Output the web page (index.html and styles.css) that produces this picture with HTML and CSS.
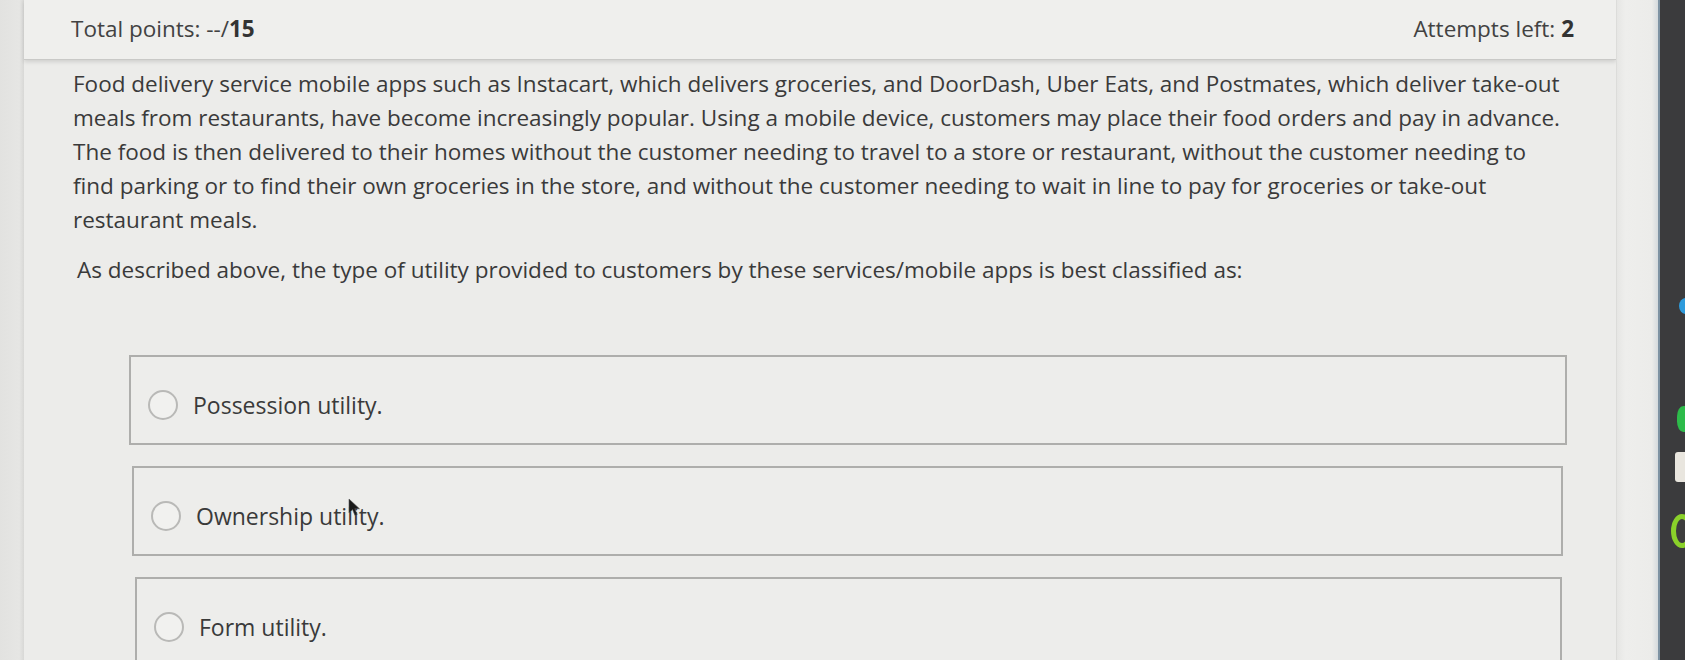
FILE: index.html
```html
<!DOCTYPE html>
<html lang="en">
<head>
<meta charset="utf-8">
<title>Quiz question</title>
<link rel="stylesheet" href="styles.css">
</head>
<body>
<div class="screen">
  <div class="left-edge"></div>
  <main class="card">
    <header class="quiz-header">
      <span class="points">Total points: --/<b>15</b></span>
      <span class="attempts">Attempts left: <b>2</b></span>
    </header>
    <section class="question">
      <p class="stem">Food delivery service mobile apps such as Instacart, which delivers groceries, and DoorDash, Uber Eats, and Postmates, which deliver take-out<br>meals from restaurants, have become increasingly popular. Using a mobile device, customers may place their food orders and pay in advance.<br>The food is then delivered to their homes without the customer needing to travel to a store or restaurant, without the customer needing to<br>find parking or to find their own groceries in the store, and without the customer needing to wait in line to pay for groceries or take-out<br>restaurant meals.</p>
      <p class="prompt">As described above, the type of utility provided to customers by these services/mobile apps is best classified as:</p>
    </section>
    <ul class="options">
      <li class="option"><span class="radio"></span><span class="label">Possession utility.</span></li>
      <li class="option"><span class="radio"></span><span class="label">Ownership utility.</span>
        <svg class="cursor" width="13" height="19" viewBox="0 0 13 19"><path d="M1 1 L1 15 L4.5 11.5 L7 17.5 L9.2 16.5 L6.8 10.8 L11.5 10.8 Z" fill="#1a1a1a" stroke="#555" stroke-width="0.6"/></svg>
      </li>
      <li class="option"><span class="radio"></span><span class="label">Form utility.</span></li>
    </ul>
  </main>
  <div class="right-strip"></div>
  <aside class="bezel">
    <span class="dot blue"></span>
    <span class="dot green"></span>
    <span class="dot white"></span>
    <span class="dot ring"></span>
  </aside>
</div>
</body>
</html>
```

FILE: styles.css
```css
html, body {
  margin: 0;
  padding: 0;
  background: #e8e8e6;
}

.screen {
  display: flex;
  width: 1685px;
  height: 660px;
  overflow: hidden;
  font-family: "Open Sans", "Noto Sans", "Liberation Sans", sans-serif;
  color: #3a3a3a;
}

.left-edge {
  flex: 0 0 24px;
  background: linear-gradient(to right, #e2e2e0, #e6e6e4 80%, #d8d8d6);
}

.card {
  flex: 0 0 1592px;
  background: #ececea;
  display: flex;
  flex-direction: column;
}

.quiz-header {
  height: 57px;
  flex: 0 0 57px;
  display: flex;
  align-items: center;
  justify-content: space-between;
  padding: 0 42px 2px 47px;
  background: #efefed;
  border-bottom: 1px solid #c9c9c7;
  box-shadow: 0 2px 4px rgba(0, 0, 0, 0.12);
  font-size: 22.5px;
  color: #424242;
}

.quiz-header b {
  font-weight: 700;
  color: #333;
}

.question {
  padding: 7px 0 0 49px;
  font-size: 22.5px;
  line-height: 34px;
}

.question p {
  margin: 0;
}

.stem {
  white-space: nowrap;
}

.prompt {
  margin-top: 16px !important;
  padding-left: 4px;
}

.options {
  list-style: none;
  margin: 68px 49px 0 105px;
  padding: 0;
  display: flex;
  flex-direction: column;
  gap: 21px;
}

.option {
  position: relative;
  height: 86px;
  flex: 0 0 86px;
  box-sizing: border-box;
  height: 90px;
  flex-basis: 90px;
  border: 2px solid #aeaeac;
  background: #ededeb;
  display: flex;
  align-items: center;
  padding: 10px 0 0 17px;
  font-size: 23px;
  color: #3a3a3a;
}

.option:nth-child(2) {
  margin: 0 4px 0 3px;
}

.option:nth-child(3) {
  margin: 0 5px 0 6px;
}

.radio {
  width: 26px;
  height: 26px;
  border: 2px solid #b9b9b7;
  border-radius: 50%;
  margin-right: 15px;
  background: #f1f1ef;
  flex: 0 0 auto;
}

.cursor {
  position: absolute;
  left: 214px;
  top: 30px;
}

.right-strip {
  flex: 0 0 42px;
  background: linear-gradient(to right, #e6e6e4, #eeeeec 20%, #ececea 85%, #d5dadd);
  border-left: 1px solid #dcdcda;
  box-sizing: border-box;
}

.bezel {
  flex: 0 0 27px;
  background: #3b3b3d;
  border-left: 2px solid #7f93a3;
  box-sizing: border-box;
  display: flex;
  flex-direction: column;
  align-items: flex-end;
  padding-top: 298px;
}

.dot {
  display: block;
  margin-right: -8px;
}

.blue {
  width: 14px;
  height: 16px;
  border-radius: 50%;
  background: #2e9bdc;
}

.green {
  width: 16px;
  height: 26px;
  border-radius: 40%;
  background: #2dbb4a;
  margin-top: 92px;
}

.white {
  width: 14px;
  height: 30px;
  border-radius: 3px;
  background: #e9e6df;
  margin-top: 20px;
  margin-right: -4px;
}

.ring {
  width: 22px;
  height: 34px;
  border-radius: 50%;
  border: 5px solid #8ad12a;
  box-sizing: border-box;
  background: #3d3d3d;
  margin-top: 32px;
}
```
